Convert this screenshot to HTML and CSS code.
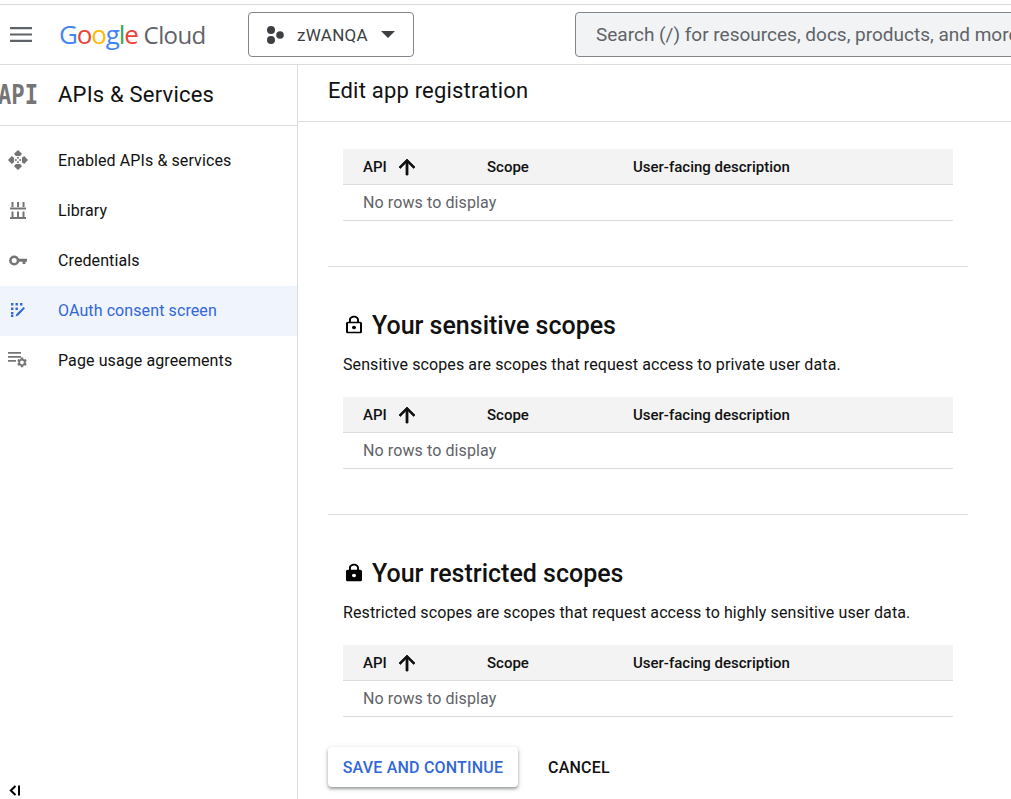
FILE: index.html
```html
<!DOCTYPE html>
<html lang="en">
<head>
  <meta charset="UTF-8">
  <meta name="viewport" content="width=device-width, initial-scale=1.0">
  <title>Edit app registration</title>
  <link rel="stylesheet" href="styles.css">
</head>
<body>
  <!-- top bar -->
  <header class="topbar">
    <svg class="menu-icon" width="22" height="15" viewBox="0 0 22 15"><path d="M0 0h22v2.200H0zM0 6.400h22v2.200H0zM0 12.800h22V15H0z" fill="#5f6368"/></svg>
    <div class="logo"><span class="logo-word"><span class="g-blue">G</span><span class="g-red">o</span><span class="g-yellow">o</span><span class="g-blue">g</span><span class="g-green">l</span><span class="g-red">e</span></span><span class="logo-cloud">Cloud</span></div>
    <button class="project-btn">
      <svg width="18" height="18" viewBox="0 0 18 18"><circle cx="5" cy="4" r="4" fill="#3c4043"/><circle cx="14" cy="9" r="3.800" fill="#3c4043"/><circle cx="5" cy="14" r="4" fill="#3c4043"/></svg>
      <span class="project-name">zWANQA</span>
      <span class="caret"></span>
    </button>
    <div class="search">Search (/) for resources, docs, products, and more</div>
  </header>

  <div class="layout">
    <!-- side nav -->
    <nav class="sidebar">
      <div class="side-head">
        <span class="api-mark">API</span>
        <span class="side-title">APIs &amp; Services</span>
      </div>
      <ul class="nav-list">
        <li class="nav-item">
          <span class="nav-icon"><svg width="20" height="20" viewBox="0 0 20 20" fill="#757575"><path d="M10 0l4 3.800-1.800 2.200H7.800L6 3.800zM10 20l-4-3.800L7.800 14h4.400l1.800 2.200zM0 10l3.800-4L6 7.800v4.400L3.800 14zM20 10l-3.800 4-2.200-1.800V7.800L16.200 6z"/><circle cx="10" cy="7.800" r="1"/><circle cx="7.800" cy="10" r="1"/><circle cx="12.200" cy="10" r="1"/><circle cx="10" cy="12.200" r="1"/></svg></span>
          Enabled APIs &amp; services
        </li>
        <li class="nav-item">
          <span class="nav-icon"><svg width="16" height="17" viewBox="0 0 16 17" fill="#757575"><path d="M1.500 0h2v5h-2zM7 0h2v5H7zM12.500 0h2v5h-2zM0 5.500h16v2H0zM1.500 9.500h2V15h-2zM7 9.500h2V15H7zM12.500 9.500h2V15h-2zM0 15h16v2H0z"/></svg></span>
          Library
        </li>
        <li class="nav-item">
          <span class="nav-icon"><svg width="18" height="11" viewBox="0 0 18 11" fill="none"><circle cx="5.200" cy="5.500" r="3.800" stroke="#757575" stroke-width="2.600"/><path d="M9 3.800h9v3h-1.600v2.200h-2.800V6.800H9z" fill="#757575"/></svg></span>
          Credentials
        </li>
        <li class="nav-item active">
          <span class="nav-icon"><svg width="14" height="14" viewBox="0 0 14 14" fill="#3367d6"><path d="M0 0h2.400v2.400H0zM4.500 0h2.400v2.400H4.500zM9 0h2.400v2.400H9zM0 4.500h2.400v2.400H0zM4.500 4.500h2.400v2.400H4.500zM0 9h2.400v2.400H0zM0 12h2.400v2H0zM12.600 4l1.400 1.300-6.800 7.200-2.600 1 .8-2.600z"/></svg></span>
          OAuth consent screen
        </li>
        <li class="nav-item">
          <span class="nav-icon"><svg width="20" height="16" viewBox="0 0 20 16" fill="#757575"><path d="M0 0h13v1.800H0zM0 4h13v1.800H0zM0 8h8v1.800H0z"/><g transform="translate(8 4.400) scale(.5)"><path d="M19.140 12.940c.04-.3.06-.61.06-.94 0-.32-.02-.64-.07-.94l2.030-1.580c.18-.14.23-.41.12-.61l-1.920-3.320c-.12-.22-.37-.29-.59-.22l-2.390.96c-.5-.38-1.030-.7-1.620-.94l-.36-2.540c-.04-.24-.24-.41-.48-.41h-3.840c-.24 0-.43.17-.47.41l-.36 2.540c-.59.24-1.130.57-1.620.94l-2.390-.96c-.22-.08-.47 0-.59.22L2.740 8.870c-.12.21-.08.47.12.61l2.030 1.580c-.05.3-.09.63-.09.94s.02.64.07.94l-2.030 1.580c-.18.14-.23.41-.12.61l1.920 3.320c.12.22.37.29.59.22l2.390-.96c.5.38 1.030.7 1.620.94l.36 2.540c.05.24.24.41.48.41h3.840c.24 0 .44-.17.47-.41l.36-2.540c.59-.24 1.130-.56 1.620-.94l2.390.96c.22.08.47 0 .59-.22l1.920-3.320c.12-.22.07-.47-.12-.61l-2.010-1.580zM12 15.600c-1.980 0-3.600-1.620-3.600-3.600s1.620-3.600 3.600-3.600 3.600 1.620 3.600 3.600-1.620 3.600-3.600 3.600z"/></g></svg></span>
          Page usage agreements
        </li>
      </ul>
      <div class="collapse">
        <svg width="11" height="11" viewBox="0 0 11 11" fill="none" stroke="#000" stroke-width="2"><path d="M6.500 1L1.800 5.500 6.500 10M10 .5v10"/></svg>
      </div>
    </nav>

    <!-- main column -->
    <main class="main">
      <div class="main-head">Edit app registration</div>
      <div class="content">
        <div class="scope-table">
          <div class="table-head">
            <span class="col-api">API<svg class="sort" width="24" height="24" viewBox="0 0 24 24"><path d="M4 12l1.410 1.410L11 7.830V20h2V7.830l5.580 5.590L20 12l-8-8-8 8z"/></svg></span>
            <span class="col-scope">Scope</span>
            <span>User-facing description</span>
          </div>
          <div class="table-empty">No rows to display</div>
        </div>

        <hr class="divider">

        <section>
          <h2 class="scope-title">
            <svg class="lock" width="24" height="20" viewBox="0 0 24 24" preserveAspectRatio="none"><path d="M12 17c1.100 0 2-.9 2-2s-.9-2-2-2-2 .9-2 2 .9 2 2 2zm6-9h-1V6c0-2.760-2.240-5-5-5S7 3.240 7 6v2H6c-1.100 0-2 .9-2 2v10c0 1.100.9 2 2 2h12c1.100 0 2-.9 2-2V10c0-1.100-.9-2-2-2zM8.900 6c0-1.710 1.390-3.100 3.100-3.100s3.100 1.390 3.100 3.100v2H8.900V6zM18 20H6V10h12v10z"/></svg>
            Your sensitive scopes
          </h2>
          <p class="scope-desc">Sensitive scopes are scopes that request access to private user data.</p>
          <div class="scope-table">
            <div class="table-head">
              <span class="col-api">API<svg class="sort" width="24" height="24" viewBox="0 0 24 24"><path d="M4 12l1.410 1.410L11 7.830V20h2V7.830l5.580 5.590L20 12l-8-8-8 8z"/></svg></span>
              <span class="col-scope">Scope</span>
              <span>User-facing description</span>
            </div>
            <div class="table-empty">No rows to display</div>
          </div>
        </section>

        <hr class="divider">

        <section>
          <h2 class="scope-title">
            <svg class="lock" width="24" height="20" viewBox="0 0 24 24" preserveAspectRatio="none"><path d="M18 8h-1V6c0-2.760-2.240-5-5-5S7 3.240 7 6v2H6c-1.100 0-2 .9-2 2v10c0 1.100.9 2 2 2h12c1.100 0 2-.9 2-2V10c0-1.100-.9-2-2-2zm-6 9c-1.100 0-2-.9-2-2s.9-2 2-2 2 .9 2 2-.9 2-2 2zm3.100-9H8.900V6c0-1.710 1.390-3.100 3.100-3.100 1.710 0 3.100 1.390 3.100 3.100v2z"/></svg>
            Your restricted scopes
          </h2>
          <p class="scope-desc">Restricted scopes are scopes that request access to highly sensitive user data.</p>
          <div class="scope-table">
            <div class="table-head">
              <span class="col-api">API<svg class="sort" width="24" height="24" viewBox="0 0 24 24"><path d="M4 12l1.410 1.410L11 7.830V20h2V7.830l5.580 5.590L20 12l-8-8-8 8z"/></svg></span>
              <span class="col-scope">Scope</span>
              <span>User-facing description</span>
            </div>
            <div class="table-empty">No rows to display</div>
          </div>
        </section>

        <div class="actions">
          <button class="btn-save">SAVE AND CONTINUE</button>
          <button class="btn-cancel">CANCEL</button>
        </div>
      </div>
    </main>
  </div>
</body>
</html>
```

FILE: styles.css
```css
* {
  margin: 0;
  padding: 0;
  box-sizing: border-box;
}
html, body {
  height: 799px;
  overflow: hidden;
  background: #fff;
  font-family: Roboto, "Liberation Sans", sans-serif;
  color: #111;
}

/* top bar */
.topbar {
  display: flex;
  align-items: center;
  height: 61px;
  margin-top: 4px;
  border-top: 1px solid #dadce0;
  border-bottom: 1px solid #dadce0;
  padding-left: 10px;
  overflow: hidden;
  white-space: nowrap;
}
.menu-icon {
  flex: none;
  margin-right: 27px;
}
.logo {
  display: flex;
  align-items: baseline;
  width: 189px;
  flex: none;
  margin-bottom: 2px;
}
.logo-word {
  font-family: "Open Sans", Roboto, sans-serif;
  font-size: 26px;
  letter-spacing: -1.150px;
  margin-right: 6px;
}
.logo-cloud {
  font-family: "Open Sans", Roboto, sans-serif;
  font-size: 24px;
  letter-spacing: -.6px;
  color: #5f6368;
}
.g-blue { color: #4285f4; }
.g-red { color: #ea4335; }
.g-yellow { color: #fbbc04; }
.g-green { color: #34a853; }

.project-btn {
  display: flex;
  align-items: center;
  flex: none;
  width: 166px;
  height: 45px;
  padding-left: 17px;
  background: #fff;
  border: 1px solid #80868b;
  border-radius: 4px;
  font-family: inherit;
  margin-right: 161px;
}
.project-name {
  margin-left: 13px;
  font-size: 17px;
  letter-spacing: .3px;
  color: #3c4043;
}
.caret {
  width: 0;
  height: 0;
  margin-left: 13px;
  border-left: 7.5px solid transparent;
  border-right: 7.5px solid transparent;
  border-top: 7.5px solid #3c4043;
}
.search {
  flex: none;
  width: 600px;
  height: 45px;
  line-height: 43px;
  padding-left: 20px;
  background: #f1f3f4;
  border: 1px solid #80868b;
  border-radius: 4px;
  font-size: 19px;
  color: #5f6368;
}

.layout {
  display: flex;
  height: 734px;
}

/* side nav */
.sidebar {
  display: flex;
  flex-direction: column;
  flex: none;
  width: 298px;
  border-right: 1px solid #dadce0;
}
.side-head {
  display: flex;
  align-items: center;
  height: 61px;
  padding-bottom: 2px;
  border-bottom: 1px solid #dadce0;
  overflow: hidden;
}
.api-mark {
  flex: none;
  width: 60px;
  margin-left: -2px;
  font-family: "DejaVu Sans Mono", "Liberation Mono", monospace;
  font-weight: 700;
  font-size: 27px;
  line-height: 1;
  color: #757575;
  transform: scaleX(.82);
  transform-origin: left center;
}
.side-title {
  font-size: 22px;
  letter-spacing: .2px;
}
.nav-list {
  list-style: none;
  margin-top: 10px;
}
.nav-item {
  display: flex;
  align-items: center;
  height: 50px;
  padding-bottom: 2px;
  font-size: 16px;
  letter-spacing: .1px;
}
.nav-item.active {
  background: #eff4fd;
  color: #3367d6;
}
.nav-icon {
  display: flex;
  justify-content: center;
  align-items: center;
  width: 36px;
  margin-right: 22px;
  flex: none;
}
.collapse {
  margin-top: auto;
  padding: 0 0 3px 9px;
  line-height: 0;
}

/* main column */
.main {
  flex: 1;
  min-width: 0;
}
.main-head {
  height: 57px;
  padding: 12px 0 0 30px;
  border-bottom: 1px solid #dadce0;
  font-size: 22px;
  letter-spacing: .2px;
  line-height: 28px;
}
.content {
  width: 670px;
  padding: 27px 0 0 30px;
}
.scope-table {
  margin-left: 15px;
  width: 610px;
}
.table-head {
  display: flex;
  align-items: center;
  height: 36px;
  padding-left: 20px;
  background: #f3f3f3;
  border-bottom: 1px solid #dadce0;
  font-size: 15px;
  font-weight: 500;
}
.col-api {
  display: flex;
  align-items: center;
  width: 124px;
}
.col-scope {
  width: 146px;
}
.sort {
  margin-left: 8px;
  fill: #111;
  stroke: #111;
  stroke-width: .8;
}
.table-empty {
  height: 36px;
  line-height: 35px;
  padding-left: 20px;
  border-bottom: 1px solid #dadce0;
  font-size: 16px;
  letter-spacing: .1px;
  color: #5f6368;
}
.divider {
  margin: 45px 0 42px;
  border: none;
  border-top: 1px solid #dadce0;
}
.scope-title {
  display: flex;
  align-items: center;
  gap: 6px;
  margin-left: 14px;
  height: 32px;
  font-size: 25px;
  font-weight: 500;
}
.scope-desc {
  margin: 14px 0 22px 15px;
  font-size: 16px;
  letter-spacing: .1px;
  line-height: 20px;
}
.actions {
  display: flex;
  align-items: center;
  margin-top: 30px;
}
.btn-save, .btn-cancel {
  font-family: inherit;
  font-size: 16px;
  font-weight: 500;
  letter-spacing: .2px;
  border: none;
  background: #fff;
  height: 40px;
  border-radius: 4px;
}
.btn-save {
  width: 190px;
  color: #3367d6;
  box-shadow: 0 2px 3px rgba(60, 64, 67, .45), 0 1px 6px rgba(60, 64, 67, .15);
}
.btn-cancel {
  margin-left: 30px;
  color: #111;
}
```
